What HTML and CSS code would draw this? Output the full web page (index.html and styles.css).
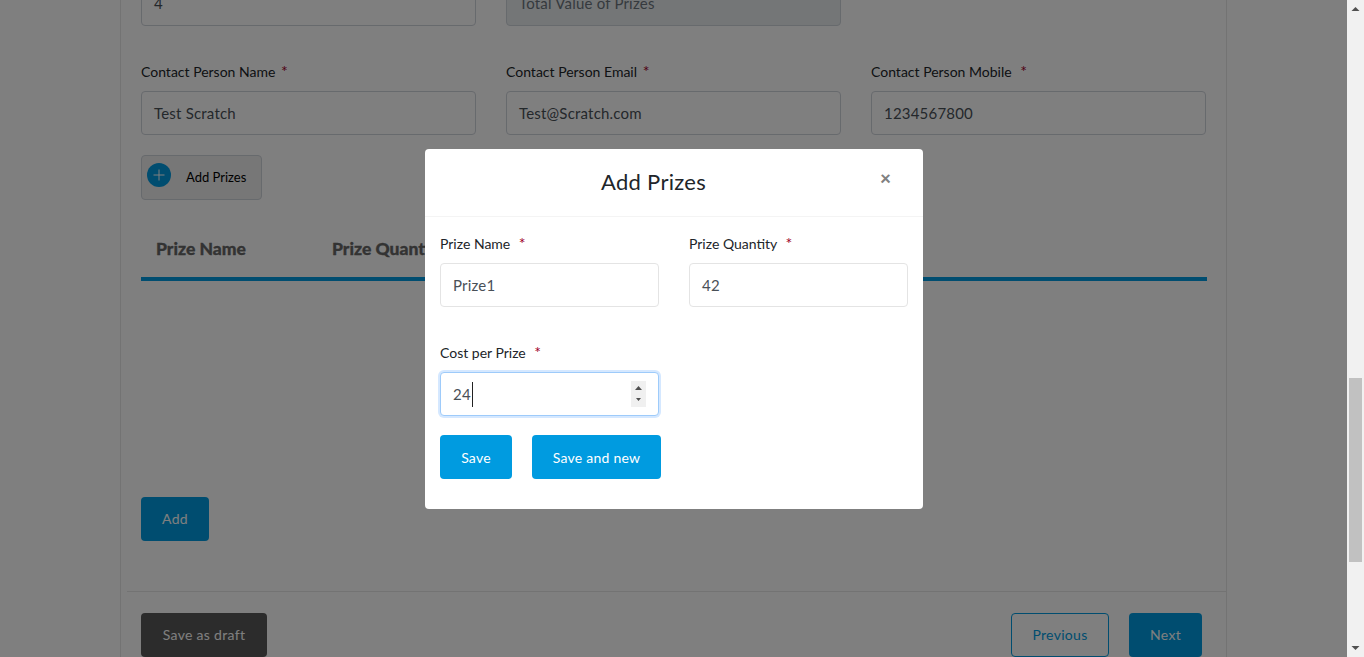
FILE: index.html
```html
<!DOCTYPE html>
<html lang="en">
<head>
<meta charset="utf-8">
<title>Add Prizes</title>
<link rel="stylesheet" href="styles.css">
</head>
<body>
<div class="viewport">
  <main class="page">
    <div class="card">
      <div class="grid top-row">
        <div class="field">
          <div class="input clipped">4</div>
        </div>
        <div class="field">
          <div class="input clipped disabled">Total Value of Prizes</div>
        </div>
      </div>
      <div class="grid contact-row">
        <div class="field">
          <label class="label">Contact Person Name <span class="req">*</span></label>
          <div class="input">Test Scratch</div>
        </div>
        <div class="field">
          <label class="label">Contact Person Email <span class="req">*</span></label>
          <div class="input">Test@Scratch.com</div>
        </div>
        <div class="field">
          <label class="label">Contact Person Mobile <span class="req gap">*</span></label>
          <div class="input">1234567800</div>
        </div>
      </div>
      <div class="add-prizes">
        <span class="plus"><svg width="24" height="24" viewBox="0 0 24 24"><path d="M12 6.500v11M6.500 12h11" stroke="#fff" stroke-width="1" fill="none"/></svg></span>
        <span class="add-prizes-text">Add Prizes</span>
      </div>
      <div class="table-head">
        <span class="th th-name">Prize Name</span>
        <span class="th">Prize Quantity</span>
      </div>
      <div class="table-body"></div>
      <button class="btn page-btn primary add-btn">Add</button>
      <div class="footer">
        <button class="btn page-btn dark draft">Save as draft</button>
        <div class="nav">
          <button class="btn page-btn outline prev">Previous</button>
          <button class="btn page-btn primary next">Next</button>
        </div>
      </div>
    </div>
  </main>
  <div class="backdrop"></div>
  <section class="modal">
    <header class="modal-head">
      <h2 class="modal-title">Add Prizes</h2>
      <span class="close">×</span>
    </header>
    <div class="modal-body">
      <div class="modal-grid">
        <div class="field">
          <label class="label">Prize Name <span class="req gap">*</span></label>
          <div class="input light">Prize1</div>
        </div>
        <div class="field">
          <label class="label">Prize Quantity <span class="req gap">*</span></label>
          <div class="input light">42</div>
        </div>
        <div class="field">
          <label class="label">Cost per Prize <span class="req gap">*</span></label>
          <div class="input light focus"><span>24</span><i class="caret"></i>
            <span class="spin"><svg width="15" height="26" viewBox="0 0 15 26"><path d="M7.500 5l3.500 4h-7zM5 17h5l-2.500 3z" fill="#505050"/></svg></span>
          </div>
        </div>
      </div>
      <div class="modal-actions">
        <button class="btn bright save">Save</button>
        <button class="btn bright save-new">Save and new</button>
      </div>
    </div>
  </section>
  <aside class="scrollbar">
    <svg class="arrow" width="17" height="17" viewBox="0 0 17 17"><path d="M8.500 7l4 4h-8z" fill="#505050"/></svg>
    <div class="thumb"></div>
    <svg class="arrow" width="17" height="17" viewBox="0 0 17 17"><path d="M4.500 6h8l-4 4z" fill="#505050"/></svg>
  </aside>
</div>
</body>
</html>
```

FILE: styles.css
```css
* { box-sizing: border-box; }
html, body { margin: 0; height: 100%; overflow: hidden; }
body { font-family: "Lato", "Liberation Sans", sans-serif; font-size: 14px; color: #212529; background: #fff; }
.viewport { position: relative; width: 1364px; height: 657px; overflow: hidden; }
.page { width: 1347px; height: 657px; overflow: hidden; padding: 0 120px; }
.card { height: 760px; margin-top: -72px; border: 1px solid #e6e6e6; border-width: 0 1px; padding: 0 20px; display: flex; flex-direction: column; }
.grid { display: grid; grid-template-columns: repeat(3, 335px); column-gap: 30px; }
.top-row { height: 134px; padding-top: 54px; }
.field { display: flex; flex-direction: column; }
.label { height: 21px; line-height: 19px; font-size: 14px; margin-bottom: 8px; color: #212529; white-space: nowrap; }
.req { color: #a00028; margin-left: 2px; font-size: 16px; line-height: 0; }
.req.gap { margin-left: 5px; }
.input { height: 44px; line-height: 42px; border: 1px solid #ced4da; border-radius: 4px; padding: 0 12px; font-size: 15px; letter-spacing: .2px; color: #495057; background: #fff; white-space: nowrap; }
.input.clipped { line-height: 40px; }
.input.disabled { background: #e9ecef; color: #6c757d; }
.add-prizes { margin-top: 20px; width: 121px; height: 45px; border: 1px solid #ced4da; border-radius: 4px; background: #efefef; display: flex; padding: 7px 5px; }
.plus { width: 24px; height: 24px; border-radius: 50%; background: #009be0; display: block; }
.add-prizes-text { margin: 6px 0 0 15px; font-size: 13px; color: #000; }
.table-head { margin-top: 28px; height: 53px; border-bottom: 4px solid #009be0; display: flex; width: 1066px; padding-left: 15px; align-items: flex-start; padding-top: 9px; }
.th { font-family: "Lato Black", "Lato", sans-serif; font-size: 17.500px; font-weight: 900; color: #666; line-height: 24px; white-space: nowrap; -webkit-text-stroke: .3px #666; }
.th-name { width: 176px; }
.table-body { height: 216px; }
.btn { border: 0; height: 44px; border-radius: 4px; font-family: inherit; font-size: 14px; letter-spacing: .25px; color: #fff; padding: 0; }
.page-btn { padding-bottom: 2px; letter-spacing: .3px; }
.primary { background: #009be0; color: #fff; }
.bright { background: #009be0; }
.add-btn { width: 68px; }
.footer { margin-top: 50px; margin-left: -14px; width: 1100px; border-top: 1px solid #e6e6e6; padding: 21px 25px 0 14px; display: flex; justify-content: space-between; }
.dark { background: #585858; width: 126px; }
.nav { display: flex; gap: 20px; }
.outline { width: 98px; background: #fff; border: 1px solid #009be0; color: #009be0; }
.next { width: 73px; }
.backdrop { position: absolute; inset: 0 17px 0 0; background: rgba(0,0,0,.5); }
.modal { position: absolute; left: 425px; top: 149px; width: 498px; height: 360px; background: #fff; border-radius: 4px; }
.modal-head { height: 68px; border-bottom: 1px solid #f4f4f4; display: flex; justify-content: center; position: relative; }
.modal-title { margin: 16px 41px 0 0; font-size: 22px; font-weight: 400; line-height: 33px; letter-spacing: .3px; }
.close { position: absolute; left: 455px; top: 17px; font-size: 19px; line-height: 24px; font-weight: 900; color: #808080; }
.modal-body { padding: 17px 15px; }
.modal-grid { display: grid; grid-template-columns: 219px 219px; column-gap: 30px; row-gap: 36px; }
.input.light { border-color: #e4e4e4; position: relative; display: flex; }
.input.focus { border-color: #9ecbfa; box-shadow: 0 0 0 2px #d5e8ff; }
.caret { display: block; width: 1px; height: 25px; background: #222; margin: 9px 0 0 1px; }
.spin { position: absolute; right: 12px; top: 8px; width: 15px; height: 26px; background: #f0f0f0; display: block; }
.spin svg { display: block; }
.modal-actions { display: flex; gap: 20px; margin-top: 19px; }
.save { width: 72px; }
.save-new { width: 129px; }
.scrollbar { position: absolute; right: 0; top: 0; width: 17px; height: 657px; background: #f1f1f1; display: flex; flex-direction: column; }
.arrow { display: block; flex: none; }
.thumb { margin: 361px 2px 0; height: 184px; background: #c1c1c1; flex: none; }
.scrollbar .arrow:last-child { margin-top: auto; }
```
